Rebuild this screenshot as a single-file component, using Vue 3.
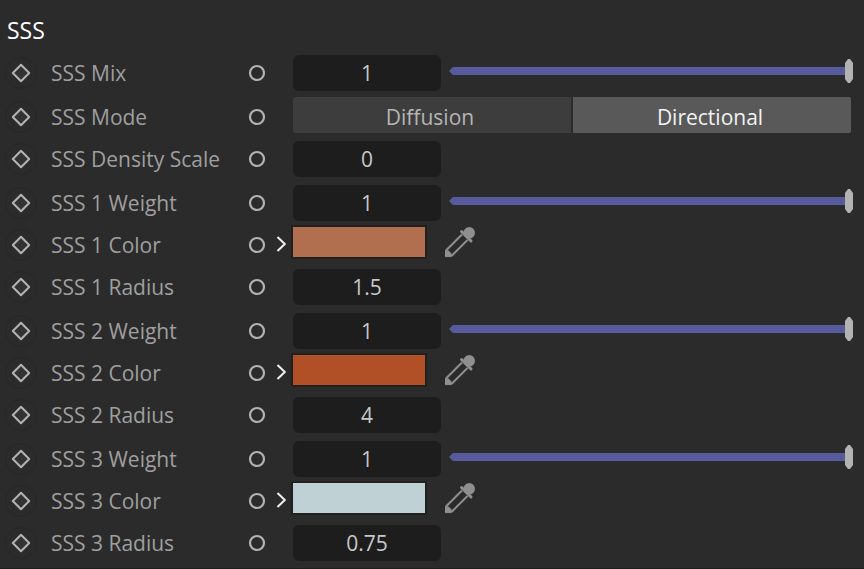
<script setup>
import { reactive } from 'vue'

const groups = reactive([
  [{ label: 'SSS Mix', type: 'slider', value: '1' }],
  [
    { label: 'SSS Mode', type: 'mode', value: 'Directional', options: ['Diffusion', 'Directional'] },
    { label: 'SSS Density Scale', type: 'number', value: '0' },
  ],
  [
    { label: 'SSS 1 Weight', type: 'slider', value: '1' },
    { label: 'SSS 1 Color', type: 'color', value: '#b16f4f' },
    { label: 'SSS 1 Radius', type: 'number', value: '1.5' },
  ],
  [
    { label: 'SSS 2 Weight', type: 'slider', value: '1' },
    { label: 'SSS 2 Color', type: 'color', value: '#b15026' },
    { label: 'SSS 2 Radius', type: 'number', value: '4' },
  ],
  [
    { label: 'SSS 3 Weight', type: 'slider', value: '1' },
    { label: 'SSS 3 Color', type: 'color', value: '#bfd1d5' },
    { label: 'SSS 3 Radius', type: 'number', value: '0.75' },
  ],
])

const idOf = (row) => row.label.toLowerCase().replaceAll(' ', '-')
</script>

<template>
  <main class="panel">
    <h1 class="title">SSS</h1>
    <section v-for="(group, g) in groups" :key="g" class="group">
      <div v-for="row in group" :key="row.label" class="row">
        <button class="icon-button key" type="button" :aria-label="`Keyframe ${row.label}`">
          <svg width="34" height="34" viewBox="0 0 34 34">
            <circle cx="17" cy="17" r="15.5" fill="none" stroke="#272727" />
            <path d="M17 8.800 25.200 17 17 25.200 8.800 17z" fill="#333" stroke="#b3b3b3" stroke-width="2" stroke-linejoin="round" />
          </svg>
        </button>
        <span v-if="row.type === 'mode'" :id="idOf(row)" class="label">{{ row.label }}</span>
        <label v-else class="label" :for="idOf(row)">{{ row.label }}</label>
        <button class="icon-button port" type="button" :aria-label="`Connect ${row.label}`">
          <svg width="18" height="18" viewBox="0 0 18 18">
            <circle cx="9" cy="9" r="7" fill="none" stroke="#b3b3b3" stroke-width="2.200" />
          </svg>
        </button>
        <div class="expand">
          <button v-if="row.type === 'color'" class="icon-button" type="button" :aria-label="`Expand ${row.label}`">
            <svg width="12" height="18" viewBox="0 0 12 18">
              <path d="M1.500 2 8.800 9 1.500 16" fill="none" stroke="#f0f0f0" stroke-width="2" />
            </svg>
          </button>
        </div>

        <div v-if="row.type === 'mode'" class="segments" role="group" :aria-labelledby="idOf(row)">
          <button
            v-for="option in row.options"
            :key="option"
            type="button"
            class="segment"
            :class="{ selected: option === row.value }"
            :aria-pressed="option === row.value"
            @click="row.value = option"
          >{{ option }}</button>
        </div>

        <div v-else-if="row.type === 'color'" class="control">
          <input :id="idOf(row)" v-model="row.value" class="swatch" type="color" />
          <button class="icon-button" type="button" :aria-label="`Pick ${row.label}`">
            <svg width="30" height="30" viewBox="0 0 30 30">
              <path d="M17 7.500 1.500 23V28.500H7L22.500 13" fill="none" stroke="#8f8f8f" stroke-width="2" />
              <path d="M0 23.500H3.500L6.500 26.500V30H0z" fill="#8f8f8f" />
              <path d="M16.500 4.500 26 14" fill="none" stroke="#8f8f8f" stroke-width="3" stroke-linecap="round" />
              <path d="M17.500 6 20 3.500 26.500 10 24 12.500z" fill="#8f8f8f" />
              <circle cx="24.200" cy="5.800" r="5.800" fill="#8f8f8f" />
            </svg>
          </button>
        </div>

        <div v-else class="control">
          <input :id="idOf(row)" v-model="row.value" class="number" type="text" inputmode="decimal" />
          <div v-if="row.type === 'slider'" class="slider">
            <div class="fill" :style="{ width: `${row.value * 100}%` }"></div>
            <input v-model="row.value" class="range" type="range" min="0" max="1" step="0.01" :aria-label="row.label" />
          </div>
        </div>
      </div>
    </section>
  </main>
</template>

<style>
body {
  margin: 0;
  background: #2b2b2b;
}
</style>

<style scoped>
.panel {
  box-sizing: border-box;
  min-height: 100vh;
  padding: 13px 11px 7px 4px;
  display: flex;
  flex-direction: column;
  gap: 8px;
  background: #2b2b2b;
  border-bottom: 1px solid #1e1e1e;
  color: #9f9f9f;
  font: 21px/36px "Open Sans", "Noto Sans", sans-serif;
}

.title {
  margin: 0;
  padding-left: 3px;
  color: #fff;
  font-size: 23px;
  font-weight: 400;
  line-height: 34px;
}

.group {
  display: flex;
  flex-direction: column;
  gap: 6px;
}

.row {
  display: grid;
  grid-template-columns: 34px 198px 42px 15px minmax(0, 1fr);
  grid-template-rows: 36px;
  align-items: center;
}

.icon-button {
  display: flex;
  padding: 0;
  border: 0;
  background: none;
}

.port {
  justify-self: center;
}

.label {
  padding-left: 13px;
  white-space: nowrap;
}

.expand {
  display: flex;
  align-self: start;
  align-items: center;
  justify-content: flex-end;
  width: 10px;
  height: 34px;
}

.control {
  display: flex;
  align-items: flex-start;
  height: 36px;
}

.number {
  box-sizing: border-box;
  flex: none;
  width: 148px;
  height: 36px;
  margin: 0;
  padding: 0;
  border: 0;
  border-radius: 6px;
  background: #1d1d1d;
  color: #c8c8c8;
  font: inherit;
  text-align: center;
}

.slider {
  display: grid;
  flex: 1;
  align-items: center;
  height: 32px;
  margin-left: 8px;
}

.slider > * {
  grid-area: 1 / 1;
}

.fill {
  height: 8px;
  background: #575a9b;
  clip-path: polygon(0 50%, 4px 0, 100% 0, 100% 100%, 4px 100%);
}

.range {
  appearance: none;
  width: 100%;
  height: 24px;
  margin: 0;
  background: transparent;
}

.range::-webkit-slider-thumb {
  appearance: none;
  width: 8px;
  height: 24px;
  border-radius: 0;
  background: #b3b3b3;
  clip-path: polygon(3px 0, 5px 0, 100% 4px, 100% 20px, 5px 100%, 3px 100%, 0 20px, 0 4px);
}

.swatch {
  appearance: none;
  width: 132px;
  height: 30px;
  margin: 0 20px 0 0;
  padding: 0;
  border: 0;
  outline: 2px solid #202020;
  background: none;
}

.swatch::-webkit-color-swatch-wrapper {
  padding: 0;
}

.swatch::-webkit-color-swatch {
  border: 0;
  border-radius: 0;
}

.segments {
  display: grid;
  grid-template-columns: 1fr 1fr;
  gap: 2px;
  padding: 0 2px 4px 0;
}

.segment {
  height: 36px;
  padding: 4px 4px 0 0;
  border: 0;
  border-radius: 2px 0 0 2px;
  background: #3d3d3d;
  color: #b5b5b5;
  font: inherit;
  line-height: 32px;
}

.segment:last-child {
  border-radius: 0 2px 2px 0;
}

.segment.selected {
  background: #595959;
  color: #f2f2f2;
}
</style>
